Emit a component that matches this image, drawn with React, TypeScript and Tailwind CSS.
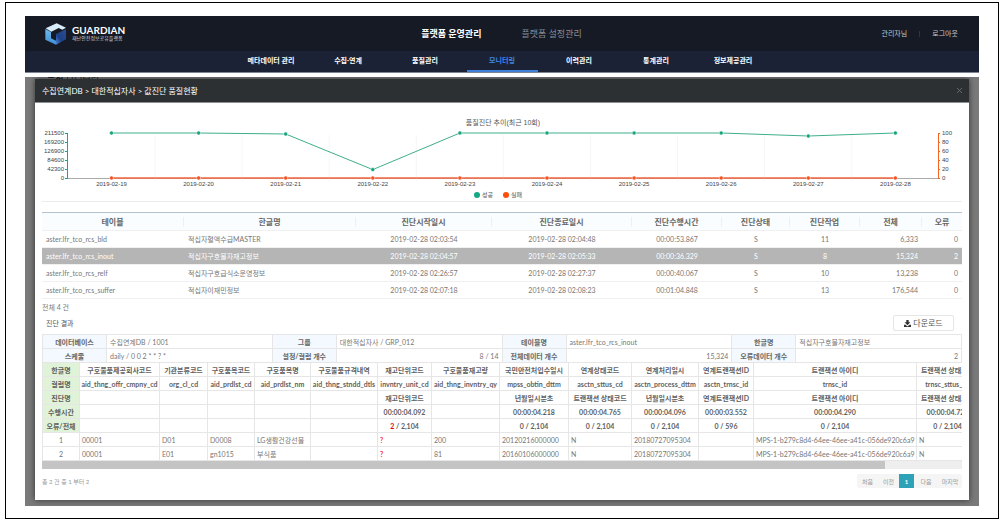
import { Fragment } from "react"
import clsx from "clsx"
import { X } from "lucide-react"

const mainMenu = ["플랫폼 운영관리", "플랫폼 설정관리"]
const subMenu = ["메타데이터 관리", "수집·연계", "품질관리", "모니터링", "이력관리", "통계관리", "정보제공관리"]

const days = ["19", "20", "21", "22", "23", "24", "25", "26", "27", "28"]
const success = [211500, 211500, 206800, 39500, 211500, 211500, 211500, 211500, 197400, 211500]
const leftTicks = ["0", "42300", "84600", "126900", "169200", "211500"]
const rightTicks = ["0", "20", "40", "60", "80", "100"]

const jobHeads = ["테이블", "한글명", "진단시작일시", "진단종료일시", "진단수행시간", "진단상태", "진단작업", "전체", "오류"]
const jobCols = ["w-[142px]", "w-[172px]", "w-[136px]", "w-[140px]", "w-[90px]", "w-[68px]", "w-[70px]", "w-[62px]", "w-[40px]"]
const jobAlign = ["text-left", "text-left", "text-center", "text-center", "text-center", "text-center", "text-center", "text-right", "text-right"]
const jobs = [
  ["aster.lfr_tco_rcs_bld", "적십자혈액수급MASTER", "2019-02-28 02:03:54", "2019-02-28 02:04:48", "00:00:53.867", "S", "11", "6,333", "0"],
  ["aster.lfr_tco_rcs_inout", "적십자구호물자재고정보", "2019-02-28 02:04:57", "2019-02-28 02:05:33", "00:00:36.329", "S", "8", "15,324", "2"],
  ["aster.lfr_tco_rcs_relf", "적십자구호급식소운영정보", "2019-02-28 02:26:57", "2019-02-28 02:27:37", "00:00:40.067", "S", "10", "13,238", "0"],
  ["aster.lfr_tco_rcs_suffer", "적십자이재민정보", "2019-02-28 02:07:18", "2019-02-28 02:08:23", "00:01:04.848", "S", "13", "176,544", "0"],
]

const info = [
  [
    { label: "데이터베이스", value: "수집연계DB / 1001" },
    { label: "그룹", value: "대한적십자사 / GRP_012" },
    { label: "테이블명", value: "aster.lfr_tco_rcs_inout" },
    { label: "한글명", value: "적십자구호물자재고정보" },
  ],
  [
    { label: "스케줄", value: "daily / 0 0 2 * * ? *" },
    { label: "설정/컬럼 개수", value: "8 / 14", right: true },
    { label: "전체데이터 개수", value: "15,324", right: true },
    { label: "오류데이터 개수", value: "2", right: true },
  ],
]

type Column = {
  width: string
  name: string
  field: string
  rule?: string
  time?: string
  errors?: string
  total?: string
  values: string[]
}

const columns: Column[] = [
  { width: "w-[80px]", name: "구호물품제공회사코드", field: "aid_thng_offr_cmpny_cd", values: ["00001", "00001"] },
  { width: "w-[48px]", name: "기관분류코드", field: "org_cl_cd", values: ["D01", "E01"] },
  { width: "w-[47px]", name: "구호품목코드", field: "aid_prdlst_cd", values: ["D0008", "gn1015"] },
  { width: "w-[56px]", name: "구호품목명", field: "aid_prdlst_nm", values: ["LG생활건강선물", "부식품"] },
  { width: "w-[67px]", name: "구호물품규격내역", field: "aid_thng_stndd_dtls", values: ["", ""] },
  { width: "w-[54px]", name: "재고단위코드", field: "invntry_unit_cd", rule: "재고단위코드", time: "00:00:04.092", errors: "2", total: "2,104", values: ["?", "?"] },
  { width: "w-[68px]", name: "구호물품재고량", field: "aid_thng_invntry_qy", values: ["200", "81"] },
  { width: "w-[69px]", name: "국민안전처입수일시", field: "mpss_obtin_dttm", rule: "년월일시분초", time: "00:00:04.218", errors: "0", total: "2,104", values: ["20120216000000", "20160106000000"] },
  { width: "w-[63px]", name: "연계상태코드", field: "asctn_sttus_cd", rule: "트랜잭션 상태코드", time: "00:00:04.765", errors: "0", total: "2,104", values: ["N", "N"] },
  { width: "w-[67px]", name: "연계처리일시", field: "asctn_process_dttm", rule: "년월일시분초", time: "00:00:04.096", errors: "0", total: "2,104", values: ["20180727095304", "20180727095304"] },
  { width: "w-[55px]", name: "연계트랜잭션ID", field: "asctn_trnsc_id", rule: "연계트랜잭션ID", time: "00:00:03.552", errors: "0", total: "596", values: ["", ""] },
  { width: "w-[163px]", name: "트랜잭션 아이디", field: "trnsc_id", rule: "트랜잭션 아이디", time: "00:00:04.290", errors: "0", total: "2,104", values: ["MPS-1-b279c8d4-64ee-46ee-a41c-056de920c6a9", "MPS-1-b279c8d4-64ee-46ee-a41c-056de920c6a9"] },
  { width: "w-[62px]", name: "트랜잭션 상태코드", field: "trnsc_sttus_cd", rule: "트랜잭션 상태코드", time: "00:00:04.721", errors: "0", total: "2,104", values: ["N", "N"] },
]

function Logo() {
  return (
    <svg viewBox="0 0 66 66" className="h-[22px] w-[22px]" aria-hidden="true">
      <defs>
        <linearGradient id="inner" x1="0" y1="1" x2="1" y2="0">
          <stop offset="0" stopColor="#4a86d8" />
          <stop offset="0.4" stopColor="#1c3f86" />
          <stop offset="1" stopColor="#2c4f92" />
        </linearGradient>
        <linearGradient id="left" x1="0" y1="0" x2="0" y2="1">
          <stop offset="0" stopColor="#6fb9ec" />
          <stop offset="1" stopColor="#3f8fd6" />
        </linearGradient>
      </defs>
      <path d="M2 16 L35 1 L63 14 L52 20 L41 15 L19 26 Z" fill="#d9ecf9" />
      <path d="M1 18 L18 27 L18 46 L33 53 L33 65 L1 50 Z" fill="url(#left)" />
      <path d="M33 33 L63 19 L63 49 L33 65 Z" fill="url(#inner)" />
    </svg>
  )
}

function Header() {
  return (
    <header>
      <div className="grid h-[35px] grid-cols-[1fr_auto_1fr] items-center bg-[#161a24] pr-[21px] pl-5">
        <a href="#" className="flex items-center gap-[5px] text-white">
          <Logo />
          <span className="flex flex-col">
            <span className="text-[10px] leading-[9px] font-bold">GUARDIAN</span>
            <span className="text-[5px] leading-[6px] text-gray-300">재난안전정보공유플랫폼</span>
          </span>
        </a>
        <nav className="flex gap-10 text-[9px]">
          {mainMenu.map((item, i) => (
            <a key={item} href="#" className={i === 0 ? "font-bold text-white" : "text-[#8a8e99]"}>
              {item}
            </a>
          ))}
        </nav>
        <div className="flex items-center justify-end gap-3 text-[7px] text-[#c5c7cc]">
          <a href="#">관리자님</a>
          <span className="h-[6px] w-px bg-[#30343f]"></span>
          <a href="#">로그아웃</a>
        </div>
      </div>
      <nav className="flex h-[22px] justify-center gap-[6px] border-b border-[#7d8794] bg-[#1b2235] text-[7px] font-bold">
        {subMenu.map((item) => (
          <a
            key={item}
            href="#"
            className={clsx(
              "flex w-[71px] items-center justify-center border-b-2",
              item === "모니터링" ? "border-[#3f7fd6] text-[#3f86e8]" : "border-transparent text-white",
            )}
          >
            {item}
          </a>
        ))}
      </nav>
    </header>
  )
}

function TrendChart() {
  const x = (i: number) => 69.5 + i * 87.1
  const y = (v: number) => 65 - (v / 211500) * 45

  return (
    <svg viewBox="0 0 920 88" className="w-full font-['Liberation_Sans','Noto_Sans_CJK_KR',sans-serif]" role="img" aria-label="품질진단 추이(최근 10회)">
      <text x="461" y="12" fontSize="7" fill="#555" textAnchor="middle">품질진단 추이(최근 10회)</text>

      {/* axes */}
      <path d="M25 65.5H896" stroke="#aaa" />
      {days.slice(1).map((d, i) => (
        <path key={d} d={`M${x(i) + 43.5} 22V68`} stroke="#f6f6f6" />
      ))}
      <path d="M25.500 20V66" stroke="#1ba784" />
      <path d="M896.500 20V66" stroke="#f26522" />
      {leftTicks.map((t, i) => (
        <g key={t}>
          <path d={`M23 ${65.500 - i * 9}H26`} stroke="#1ba784" />
          <text x="22" y={67 - i * 9} fontSize="6" fill="#444" textAnchor="end">{t}</text>
        </g>
      ))}
      {rightTicks.map((t, i) => (
        <g key={t}>
          <path d={`M896 ${65.500 - i * 9}H898`} stroke="#f26522" />
          <text x="900" y={67 - i * 9} fontSize="6" fill="#444">{t}</text>
        </g>
      ))}

      {/* series */}
      <polyline points={success.map((v, i) => `${x(i)},${y(v)}`).join(" ")} fill="none" stroke="#3fae8c" />
      <path d={`M${x(0)} 65H${x(9)}`} stroke="#f4653c" strokeWidth="1.5" />
      {success.map((v, i) => (
        <g key={i}>
          <circle cx={x(i)} cy={y(v)} r="2" fill="#12a57c" stroke="#fff" strokeWidth="0.5" />
          <circle cx={x(i)} cy="65" r="2" fill="#f4511e" stroke="#fff" strokeWidth="0.5" />
          <text x={x(i)} y="73" fontSize="6" fill="#444" textAnchor="middle">{`2019-02-${days[i]}`}</text>
        </g>
      ))}

      {/* legend */}
      <circle cx="435" cy="82" r="3" fill="#14a883" />
      <text x="440" y="84" fontSize="6" fill="#555">성공</text>
      <circle cx="464" cy="82" r="3" fill="#fb4f0a" />
      <text x="469" y="84" fontSize="6" fill="#555">실패</text>
    </svg>
  )
}

function JobTable() {
  return (
    <table className="w-full table-fixed border-t border-[#b5c0cf] text-[7px] leading-[10px] text-[#777]">
      <thead className="bg-[#f9fdff] text-[8px] text-[#666]">
        <tr className="h-[18px]">
          {jobHeads.map((head, i) => (
            <th key={head} className={clsx(jobCols[i], "border-b border-[#f0f0f0] p-0")}>
              <div className={clsx(i < jobHeads.length - 1 && "border-r border-[#eef1f2]")}>{head}</div>
            </th>
          ))}
        </tr>
      </thead>
      <tbody>
        {jobs.map((job, row) => (
          <tr key={job[0]} className={clsx("h-[17px]", row === 1 && "bg-[#b5b5b5] text-white")}>
            {job.map((cell, i) => (
              <td key={i} className={clsx(jobAlign[i], "border-b border-[#f0f0f0] px-1 py-0 whitespace-nowrap")}>
                {cell}
              </td>
            ))}
          </tr>
        ))}
      </tbody>
    </table>
  )
}

function InfoTable() {
  return (
    <table className="w-full table-fixed border-collapse text-[7px] leading-[10px] text-[#777]">
      <colgroup>
        {info[0].map((cell) => (
          <Fragment key={cell.label}>
            <col className="w-[64px]" />
            <col />
          </Fragment>
        ))}
      </colgroup>
      <tbody>
        {info.map((row, i) => (
          <tr key={i} className="h-[14px]">
            {row.map((cell) => (
              <Fragment key={cell.label}>
                <th className="border border-[#e6e6e6] bg-[#f3f9fe] p-0 text-[#666]">{cell.label}</th>
                <td className={clsx("border border-[#e6e6e6] px-[3px] py-0", cell.right && "text-right")}>{cell.value}</td>
              </Fragment>
            ))}
          </tr>
        ))}
      </tbody>
    </table>
  )
}

const headCell = "border border-[#e6e6e6] p-0 font-bold whitespace-nowrap"
const sideCell = "border border-[#e6e6e6] bg-[#e0f3d8] p-0 font-bold"

function ResultTable() {
  return (
    <div className="overflow-hidden">
      <table className="-mt-px w-[936px] table-fixed border-collapse text-[7px] leading-[10px] text-[#5f5f5f]">
        <thead>
          <tr className="h-[14px]">
            <th className={clsx(sideCell, "w-[37px]")}>한글명</th>
            {columns.map((c, i) => (
              <th key={i} className={clsx(headCell, c.width)}>{c.name}</th>
            ))}
          </tr>
          <tr className="h-[14px]">
            <th className={sideCell}>컬럼명</th>
            {columns.map((c, i) => <th key={i} className={headCell}>{c.field}</th>)}
          </tr>
          <tr className="h-[14px]">
            <th className={sideCell}>진단명</th>
            {columns.map((c, i) => <th key={i} className={headCell}>{c.rule}</th>)}
          </tr>
          <tr className="h-[14px]">
            <th className={sideCell}>수행시간</th>
            {columns.map((c, i) => <th key={i} className={headCell}>{c.time}</th>)}
          </tr>
          <tr className="h-[14px]">
            <th className={sideCell}>오류/전체</th>
            {columns.map((c, i) => (
              <th key={i} className={headCell}>
                {c.total && (
                  <>
                    <span className={c.errors !== "0" ? "text-red-600" : undefined}>{c.errors}</span> / {c.total}
                  </>
                )}
              </th>
            ))}
          </tr>
        </thead>
        <tbody className="text-[#777]">
          {[0, 1].map((row) => (
            <tr key={row} className="h-[14px]">
              <td className="border border-[#e6e6e6] p-0 text-center">{row + 1}</td>
              {columns.map((c, i) => (
                <td
                  key={i}
                  className={clsx(
                    "border border-[#e6e6e6] px-[2px] py-0 whitespace-nowrap",
                    c.values[row] === "?" && "font-bold text-red-500",
                  )}
                >
                  {c.values[row]}
                </td>
              ))}
            </tr>
          ))}
        </tbody>
      </table>
      <div className="h-2 bg-[#eee]">
        <div className="h-full w-11/12 bg-[#c4c4c4]"></div>
      </div>
    </div>
  )
}

function Pagination() {
  return (
    <div className="flex items-center justify-between text-[6px] text-[#999]">
      <p>총 2 건 중 1 부터 2</p>
      <div className="flex h-[14px] rounded-xs bg-[#f5f5f5]">
        <button className="w-[21px]">처음</button>
        <button className="w-[21px]">이전</button>
        <button className="w-[15px] bg-[#2ea3b7] font-bold text-white">1</button>
        <button className="w-[24px]">다음</button>
        <button className="w-[24px]">마지막</button>
      </div>
    </div>
  )
}

function DiagnosisModal() {
  return (
    <section className="relative bg-white shadow-[0_0_6px_rgba(0,0,0,0.6)]">
      <div className="flex h-6 items-center justify-between border-b border-[#8d9193] bg-[#2c3033] pr-[5px] pl-[7px]">
        <h2 className="text-[8px] text-white">수집연계DB &gt; 대한적십자사 &gt; 값진단 품질현황</h2>
        <button aria-label="닫기" className="text-[#73787b]">
          <X size={9} strokeWidth={2} />
        </button>
      </div>

      <div className="px-[7px] pt-[10px] pb-3">
        <div className="mb-[10px] flex border-b border-[#ececec]">
          <TrendChart />
        </div>
        <JobTable />
        <p className="text-[7px] leading-4 text-[#777]">전체 4 건</p>
        <div className="mb-[3px] flex items-center justify-between px-1">
          <h3 className="text-[7px] text-[#555]">진단 결과</h3>
          <button className="mr-1 flex h-4 w-[61px] items-center justify-center gap-[2px] rounded-xs border border-[#e6e6e6] text-[8px] text-[#555]">
            <svg viewBox="0 0 12 12" className="h-[7px] w-[7px]" fill="#333" aria-hidden="true">
              <path d="M4 0h4v4h3L6 9 1 4h3z" />
              <path d="M0 8h2.500L6 11l3.500-3H12v4H0z" />
            </svg>
            다운로드
          </button>
        </div>
        <InfoTable />
        <ResultTable />
        <div className="pt-[5px]">
          <Pagination />
        </div>
      </div>
    </section>
  )
}

export default function App() {
  return (
    <div className="bg-white pt-[2px] pr-[6px] pb-[2px] pl-[5px] font-['Lato','Noto_Sans_CJK_KR',sans-serif]">
      <div className="border border-black px-[19px] pt-[13px] pb-3">
        <Header />
        <main className="relative mt-1 overflow-hidden bg-[#7a7a7a] px-[10px] pt-[2px] pb-[6px]">
          <h1 className="absolute -top-[3px] left-[22px] text-[9px] leading-3 text-[#222]">
            <b>품질</b> 모니터링
          </h1>
          <DiagnosisModal />
        </main>
      </div>
    </div>
  )
}
